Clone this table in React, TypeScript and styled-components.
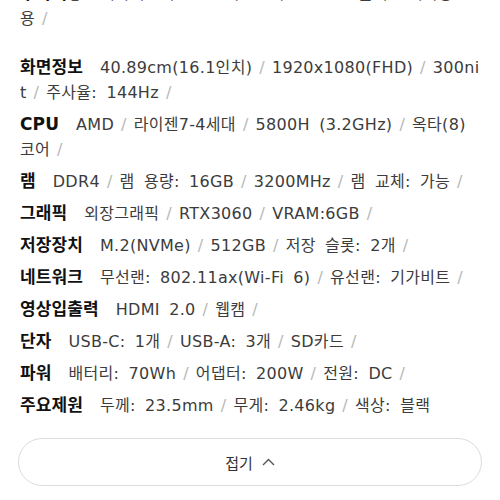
import React from "react";
import styled, { createGlobalStyle } from "styled-components";

const Global = createGlobalStyle`
  html, body { margin: 0; padding: 0; background: #fff; overflow: hidden; }
  body { font-family: "DejaVu Sans", "Noto Sans CJK KR", sans-serif; }
`;

const Page = styled.div`
  width: 500px;
  height: 500px;
  overflow: hidden;
  display: flex;
  flex-direction: column;
`;

const SpecList = styled.div`
  display: flex;
  flex-direction: column;
  gap: 7px;
  padding: 0 20px 0 20px;
  margin-top: -19px;
`;

const SpecItem = styled.p<{ $spaced?: boolean }>`
  margin: 0 0 ${(p) => (p.$spaced ? "17px" : "0")} 0;
  font-size: 16px;
  line-height: 25px;
  color: #3c3c3c;
  word-break: break-all;
  letter-spacing: 0.3px;
  word-spacing: 4px;
`;

const Label = styled.strong`
  font-family: "DejaVu Sans", "Noto Sans CJK KR", sans-serif;
  font-weight: 700;
  font-size: 17px;
  color: #111;
  margin-right: 17px;
  letter-spacing: 0.1px;
  word-spacing: 0;
`;

const Slash = styled.span`
  color: #b8b8b8;
  margin: 0 7px;
`;

const FoldButton = styled.button`
  margin: 20px 18px 0 18px;
  height: 48px;
  border: 1px solid #dcdcdc;
  border-radius: 24px;
  background: #fff;
  display: flex;
  align-items: center;
  justify-content: center;
  gap: 9px;
  font-family: "Noto Sans CJK KR", sans-serif;
  font-size: 15px;
  color: #333;
  padding: 0;
`;

const Chevron = () => (
  <svg width="13" height="8" viewBox="0 0 13 8" fill="none">
    <path d="M1 7L6.5 1.5L12 7" stroke="#555" strokeWidth="1.4" />
  </svg>
);

type Spec = { label: string; values: string[]; spaced?: boolean };

const specs: Spec[] = [
  {
    label: "부가기능",
    values: ["백라이트키보드", "지문인식", "HDMI 출력", "게이밍전용"],
    spaced: true,
  },
  {
    label: "화면정보",
    values: ["40.89cm(16.1인치)", "1920x1080(FHD)", "300nit", "주사율: 144Hz"],
  },
  {
    label: "CPU",
    values: ["AMD", "라이젠7-4세대", "5800H (3.2GHz)", "옥타(8)코어"],
  },
  { label: "램", values: ["DDR4", "램 용량: 16GB", "3200MHz", "램 교체: 가능"] },
  { label: "그래픽", values: ["외장그래픽", "RTX3060", "VRAM:6GB"] },
  { label: "저장장치", values: ["M.2(NVMe)", "512GB", "저장 슬롯: 2개"] },
  { label: "네트워크", values: ["무선랜: 802.11ax(Wi-Fi 6)", "유선랜: 기가비트"] },
  { label: "영상입출력", values: ["HDMI 2.0", "웹캠"] },
  { label: "단자", values: ["USB-C: 1개", "USB-A: 3개", "SD카드"] },
  { label: "파워", values: ["배터리: 70Wh", "어댑터: 200W", "전원: DC"] },
  { label: "주요제원", values: ["두께: 23.5mm", "무게: 2.46kg", "색상: 블랙"] },
];

export default function App() {
  return (
    <Page>
      <Global />
      <SpecList>
        {specs.map((s, i) => (
          <SpecItem key={s.label} $spaced={s.spaced}>
            <Label>{s.label}</Label>
            {s.values.map((v, j) => (
              <React.Fragment key={j}>
                {v}
                {(j < s.values.length - 1 || i < specs.length - 1) && <Slash>/</Slash>}
              </React.Fragment>
            ))}
          </SpecItem>
        ))}
      </SpecList>
      <FoldButton>
        접기
        <Chevron />
      </FoldButton>
    </Page>
  );
}
